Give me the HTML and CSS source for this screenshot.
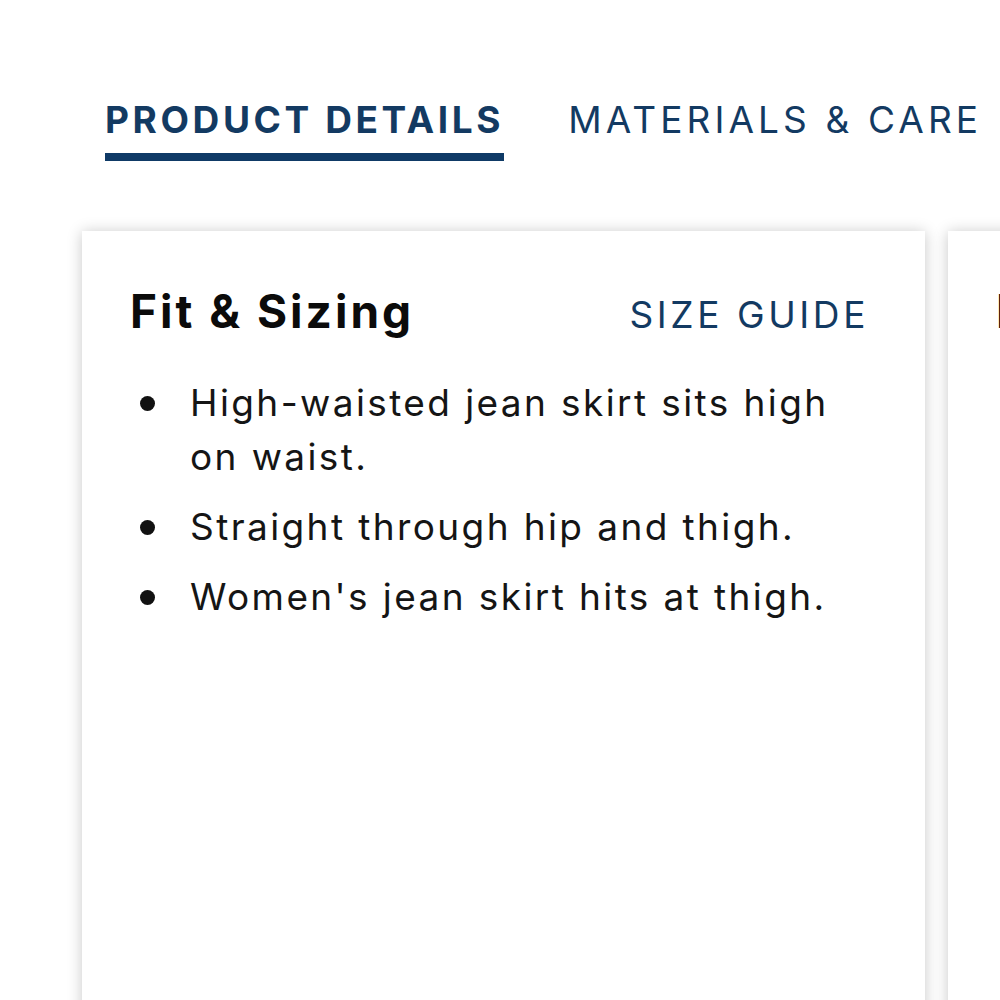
FILE: index.html
```html
<!DOCTYPE html>
<html>
<head>
<meta charset="utf-8">
<link rel="stylesheet" href="styles.css">
</head>
<body>
<div class="page">
  <nav class="tabs">
    <div class="tab active">PRODUCT DETAILS</div>
    <div class="tab">MATERIALS &amp; CARE</div>
  </nav>
  <div class="cards">
    <section class="card">
      <div class="card-head">
        <h2 class="card-title">Fit &amp; Sizing</h2>
        <a class="size-guide">SIZE GUIDE</a>
      </div>
      <ul class="list">
        <li>High-waisted jean skirt sits high on waist.</li>
        <li>Straight through hip and thigh.</li>
        <li>Women's jean skirt hits at thigh.</li>
      </ul>
    </section>
    <section class="card">
      <div class="card-head">
        <h2 class="card-title">Details</h2>
      </div>
    </section>
  </div>
</div>
</body>
</html>
```
FILE: styles.css
```css
html, body {
  margin: 0;
  padding: 0;
  background: #ffffff;
}
body {
  font-family: "Inter", "Lato", sans-serif;
  color: #111;
  overflow: hidden;
  width: 1000px;
  height: 1000px;
}
.page {
  padding-top: 100px;
}
.tabs {
  display: flex;
  gap: 64px;
  padding-left: 105px;
  white-space: nowrap;
}
.tab {
  font-size: 37px;
  line-height: 40px;
  color: #133a62;
  letter-spacing: 4.1px;
  padding-bottom: 13px;
  border-bottom: 8px solid transparent;
}
.tab.active {
  font-weight: 700;
  border-bottom-color: #0f3a66;
  letter-spacing: 3.6px;
}
.cards {
  display: flex;
  gap: 23px;
  padding-left: 82px;
  margin-top: 70px;
}
.card {
  flex: 0 0 843px;
  height: 900px;
  box-sizing: border-box;
  background: #fff;
  box-shadow: 0 1px 14px rgba(0,0,0,0.22);
  padding: 52px 56px 0 48px;
}
.card-head {
  display: flex;
  justify-content: space-between;
  align-items: baseline;
}
.card-title {
  margin: 0;
  font-size: 46px;
  font-weight: 700;
  color: #0b0b0b;
  letter-spacing: 3px;
}
.size-guide {
  font-size: 37px;
  color: #133a62;
  letter-spacing: 3.6px;
}
.list {
  margin: 37px 0 0 0;
  padding: 0 0 0 60px;
  list-style: none;
  font-size: 37px;
  line-height: 54px;
  color: #151515;
  letter-spacing: 2.4px;
}
.list li {
  position: relative;
  margin-bottom: 16px;
}
.list li::before {
  content: "";
  position: absolute;
  left: -50px;
  top: 20px;
  width: 15px;
  height: 15px;
  border-radius: 50%;
  background: #111;
}
```
